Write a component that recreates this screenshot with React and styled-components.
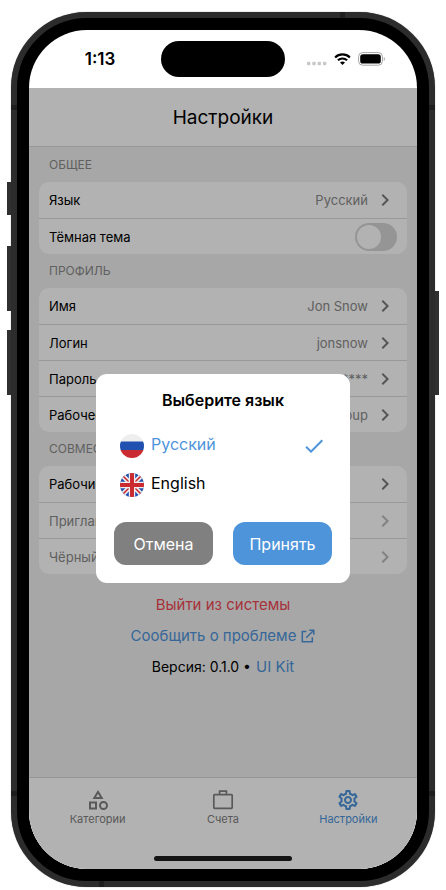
import React, { useState } from "react";
import styled, { createGlobalStyle } from "styled-components";
import {
  MdCheck,
  MdChevronRight,
  MdOutlineCategory,
  MdOutlineSettings,
} from "react-icons/md";

const blue = "#4e94da";

const GlobalStyle = createGlobalStyle`
  *, *::before, *::after { box-sizing: border-box; }
  body { margin: 0; background: #fff; font-family: Inter, "Liberation Sans", sans-serif; color: #000; }
  button { font: inherit; color: inherit; background: none; border: 0; padding: 0; cursor: pointer; }
  a { color: inherit; text-decoration: none; }
  h1, h2 { margin: 0; }
`;

const Page = styled.div`
  display: flex;
  min-height: 100vh;
  padding: 12px 11px 3px;
`;

const Phone = styled.div`
  position: relative;
  display: flex;
  flex: 1;
  padding: 12px;
  border: 6px solid #2c2c2c;
  border-radius: 76px;
  background: #000;
  box-shadow: 0 0 1px #6a6a6a;
`;

const SideButton = styled.span`
  position: absolute;
  ${(p) => p.$side}: -10px;
  top: ${(p) => p.$top}px;
  width: 4px;
  height: ${(p) => p.$height}px;
  background: #303030;
`;

const Antenna = styled.span`
  position: absolute;
  background: #1e1e1e;
  width: ${(p) => (p.$flat ? 5 : 6)}px;
  height: ${(p) => (p.$flat ? 6 : 5)}px;
  top: ${(p) => p.$top};
  right: ${(p) => p.$right};
  bottom: ${(p) => p.$bottom};
  left: ${(p) => p.$left};
`;

const Screen = styled.div`
  display: flex;
  flex-direction: column;
  flex: 1;
  min-width: 0;
  overflow: hidden;
  border-radius: 58px;
  background: #fff;
`;

const StatusBar = styled.div`
  display: grid;
  grid-template-columns: 1fr 124px 1fr;
  align-items: center;
  height: 58px;
`;

const Time = styled.span`
  padding-left: 10px;
  text-align: center;
  font-size: 17px;
  font-weight: 600;
`;

const Island = styled.span`
  height: 36px;
  border-radius: 18px;
  background: #000;
`;

const StatusIcons = styled.div`
  display: flex;
  align-items: center;
  gap: 7px;
  padding-left: 22px;
`;

const AppView = styled.div`
  position: relative;
  display: flex;
  flex: 1;
  flex-direction: column;
  background: #f0f0f0;
`;

const Header = styled.header`
  display: flex;
  align-items: center;
  justify-content: center;
  height: 59px;
  background: #fff;
  border-bottom: 1px solid #d8d8d8;
`;

const Heading = styled.h1`
  font-size: 19px;
  font-weight: 400;
`;

const Content = styled.main`
  flex: 1;
  padding: 1px 10px 0;
`;

const SectionTitle = styled.h2`
  padding: 0 10px;
  font-size: 12px;
  font-weight: 400;
  line-height: 34px;
  color: #8a8a8a;
  text-transform: uppercase;
  white-space: nowrap;
`;

const Card = styled.div`
  overflow: hidden;
  border-radius: 10px;
  background: #fff;
`;

const RowButton = styled.button`
  && {
    display: flex;
    align-items: center;
    width: 100%;
    height: 36px;
    padding: 0 10px;
    font-size: 13px;
    white-space: nowrap;
    color: ${(p) => (p.disabled ? "#8a8a8a" : "#000")};
  }
  && + && {
    border-top: 1px solid #dcdcdc;
  }
  svg {
    color: ${(p) => (p.disabled ? "#bababa" : "#7a7a7a")};
  }
`;

const RowLabel = styled.label`
  display: flex;
  align-items: center;
  justify-content: space-between;
  height: 36px;
  padding: 0 10px;
  border-top: 1px solid #dcdcdc;
  font-size: 13px;
`;

const Value = styled.span`
  margin-left: auto;
  margin-right: 5px;
  color: #8a8a8a;
`;

const Switch = styled.input`
  appearance: none;
  width: 42px;
  height: 28px;
  margin: 0;
  padding: 2px;
  border-radius: 14px;
  background: #d6d6d6;
  &::before {
    content: "";
    display: block;
    width: 24px;
    height: 24px;
    border-radius: 12px;
    background: #fff;
  }
  &:checked {
    background: ${blue};
  }
  &:checked::before {
    margin-left: auto;
  }
`;

const Footer = styled.div`
  display: flex;
  flex-direction: column;
  align-items: center;
  margin-top: 15px;
  font-size: 15px;
  line-height: 31px;
`;

const DangerButton = styled.button`
  && {
    color: #ee4855;
  }
`;

const BlueLink = styled.a`
  display: flex;
  align-items: center;
  gap: 5px;
  font-size: 15px;
  color: ${blue};
`;

const Version = styled.div`
  display: flex;
  gap: 5px;
  font-size: 14px;
`;

const TabBar = styled.nav`
  display: grid;
  grid-template-columns: repeat(3, 1fr);
  height: 92px;
  padding: 10px 6px 0;
  border-top: 1px solid #d8d8d8;
  background: #fff;
`;

const Tab = styled.a`
  display: flex;
  flex-direction: column;
  align-items: center;
  font-size: 11px;
  line-height: 14px;
  color: ${(p) => (p.$active ? blue : "#808080")};
`;

const HomeIndicator = styled.span`
  position: absolute;
  bottom: 8px;
  left: 50%;
  width: 138px;
  height: 5px;
  margin-left: -69px;
  border-radius: 3px;
  background: #141414;
`;

const Overlay = styled.div`
  position: absolute;
  inset: 0;
  display: flex;
  align-items: center;
  justify-content: center;
  padding: 0 67px;
  background: rgba(0, 0, 0, 0.3);
`;

const Dialog = styled.form`
  width: 100%;
  max-width: 360px;
  padding: 16px 18px 18px;
  border-radius: 11px;
  background: #fff;
`;

const DialogTitle = styled.h2`
  margin-bottom: 16px;
  font-size: 16px;
  font-weight: 600;
  line-height: 20px;
  text-align: center;
`;

const Option = styled.label`
  display: flex;
  align-items: center;
  gap: 7px;
  height: 39px;
  padding: 0 6px;
  font-size: 16px;
  color: ${(p) => (p.$selected ? blue : "#000")};
  cursor: pointer;
`;

const HiddenRadio = styled.input`
  position: absolute;
  opacity: 0;
  pointer-events: none;
`;

const OptionText = styled.span`
  flex: 1;
  padding-bottom: 3px;
`;

const Actions = styled.div`
  display: grid;
  grid-template-columns: 1fr 1fr;
  gap: 20px;
  margin-top: 18px;
`;

const ActionButton = styled.button`
  && {
    height: 43px;
    border-radius: 12px;
    background: ${(p) => (p.$primary ? blue : "#808080")};
    color: #fff;
    font-size: 16px;
  }
`;

const SignalDots = () => (
  <svg width="20" height="14" viewBox="0 0 20 14" fill="#c8c8c8">
    <rect x="0" y="9.8" width="3.4" height="3.4" rx="1" />
    <rect x="5.3" y="9.8" width="3.4" height="3.4" rx="1" />
    <rect x="10.6" y="9.8" width="3.4" height="3.4" rx="1" />
    <rect x="15.9" y="9.8" width="3.4" height="3.4" rx="1" />
  </svg>
);

const Wifi = () => (
  <svg width="17" height="12" viewBox="0 0 17 12" fill="none" stroke="#000" strokeWidth="2.1">
    <path d="M1.1 4.4a10.6 10.6 0 0 1 14.8 0" />
    <path d="M3.9 7.3a6.6 6.6 0 0 1 9.2 0" />
    <path d="M8.5 12 6 9.6a3.6 3.6 0 0 1 5 0z" fill="#000" stroke="none" />
  </svg>
);

const Battery = () => (
  <svg width="28" height="14" viewBox="0 0 28 14">
    <rect x="0.6" y="0.6" width="23.8" height="12.6" rx="4" fill="none" stroke="#a6a6a6" strokeWidth="1" />
    <rect x="2.2" y="2.2" width="20.6" height="9.4" rx="2.6" />
    <path d="M25.8 5v4c1.4-.5 1.4-3.5 0-4z" fill="#9a9a9a" />
  </svg>
);

const ExternalLink = () => (
  <svg width="14" height="14" viewBox="0 0 14 14" fill="none" stroke="currentColor" strokeWidth="1.5">
    <path d="M5.5 2.5H1.3v10.2h10V8.2" />
    <path d="M8.2 1.2h4.6v4.600M12.8 1.200 5.200 8.800" />
  </svg>
);

const Briefcase = () => (
  <svg width="24" height="24" viewBox="0 0 24 24" fill="none" stroke="currentColor" strokeWidth="1.7">
    <rect x="2.8" y="6.600" width="18.4" height="13.8" rx="0.8" />
    <path d="M8.600 6.600V3.200h6.800v3.400" />
  </svg>
);

const FlagRu = () => (
  <svg width="24" height="24" viewBox="0 0 24 24">
    <clipPath id="flag-ru"><circle cx="12" cy="12" r="12" /></clipPath>
    <g clipPath="url(#flag-ru)">
      <rect width="24" height="24" fill="#eee" />
      <rect y="7.500" width="24" height="9" fill="#2050b0" />
      <rect y="16" width="24" height="8" fill="#ca2b31" />
    </g>
  </svg>
);

const FlagEn = () => (
  <svg width="24" height="24" viewBox="0 0 24 24">
    <clipPath id="flag-en"><circle cx="12" cy="12" r="12" /></clipPath>
    <g clipPath="url(#flag-en)">
      <rect width="24" height="24" fill="#2050b0" />
      <path d="M2 2l20 20M22 2 2 22" stroke="#eee" strokeWidth="4.6" />
      <path d="M3 3l18 18M21 3 3 21" stroke="#ca2b31" strokeWidth="1.6" />
      <path d="M12 0v24M0 12h24" stroke="#eee" strokeWidth="6.4" />
      <path d="M12 0v24M0 12h24" stroke="#ca2b31" strokeWidth="4" />
    </g>
  </svg>
);

const Row = ({ label, value, disabled }) => (
  <RowButton type="button" disabled={disabled}>
    <span>{label}</span>
    <Value>{value}</Value>
    <MdChevronRight size={24} />
  </RowButton>
);

const languages = [
  { id: "ru", name: "Русский", Flag: FlagRu },
  { id: "en", name: "English", Flag: FlagEn },
];

export default function App() {
  const [language, setLanguage] = useState("ru");
  const [dark, setDark] = useState(false);

  return (
    <>
      <GlobalStyle />
      <Page>
        <Phone>
          <SideButton $side="left" $top={164} $height={33} />
          <SideButton $side="left" $top={228} $height={65} />
          <SideButton $side="left" $top={312} $height={65} />
          <SideButton $side="right" $top={273} $height={104} />
          <Antenna $top="87px" $left="-6px" />
          <Antenna $top="87px" $right="-6px" />
          <Antenna $bottom="85px" $left="-6px" />
          <Antenna $bottom="85px" $right="-6px" />
          <Antenna $flat $top="-6px" $right="84px" />
          <Antenna $flat $bottom="-6px" $left="82px" />
          <Screen>
            <StatusBar>
              <Time>1:13</Time>
              <Island />
              <StatusIcons>
                <SignalDots />
                <Wifi />
                <Battery />
              </StatusIcons>
            </StatusBar>
            <AppView>
              <Header><Heading>Настройки</Heading></Header>
              <Content>
                <SectionTitle>Общее</SectionTitle>
                <Card>
                  <Row label="Язык" value="Русский" />
                  <RowLabel>
                    Тёмная тема
                    <Switch type="checkbox" role="switch" checked={dark} onChange={(e) => setDark(e.target.checked)} />
                  </RowLabel>
                </Card>
                <SectionTitle>Профиль</SectionTitle>
                <Card>
                  <Row label="Имя" value="Jon Snow" />
                  <Row label="Логин" value="jonsnow" />
                  <Row label="Пароль" value="********" />
                  <Row label="Рабочее имя" value="Group" />
                </Card>
                <SectionTitle>Совместно</SectionTitle>
                <Card>
                  <Row label="Рабочие группы" />
                  <Row label="Приглашения" disabled />
                  <Row label="Чёрный список" disabled />
                </Card>
                <Footer>
                  <DangerButton type="button">Выйти из системы</DangerButton>
                  <BlueLink href="#report">Сообщить о проблеме <ExternalLink /></BlueLink>
                  <Version>
                    <span>Версия: 0.1.0 •</span>
                    <BlueLink href="#ui-kit">UI Kit</BlueLink>
                  </Version>
                </Footer>
              </Content>
              <TabBar>
                <Tab href="#categories"><MdOutlineCategory size={24} />Категории</Tab>
                <Tab href="#accounts"><Briefcase />Счета</Tab>
                <Tab href="#settings" $active><MdOutlineSettings size={24} />Настройки</Tab>
              </TabBar>
              <Overlay>
                <Dialog role="dialog" aria-labelledby="language-title" onSubmit={(e) => e.preventDefault()}>
                  <DialogTitle id="language-title">Выберите язык</DialogTitle>
                  {languages.map(({ id, name, Flag }) => (
                    <Option key={id} $selected={language === id}>
                      <HiddenRadio type="radio" name="language" checked={language === id} onChange={() => setLanguage(id)} />
                      <Flag />
                      <OptionText>{name}</OptionText>
                      {language === id && <MdCheck size={24} />}
                    </Option>
                  ))}
                  <Actions>
                    <ActionButton type="button">Отмена</ActionButton>
                    <ActionButton type="submit" $primary>Принять</ActionButton>
                  </Actions>
                </Dialog>
              </Overlay>
              <HomeIndicator />
            </AppView>
          </Screen>
        </Phone>
      </Page>
    </>
  );
}
